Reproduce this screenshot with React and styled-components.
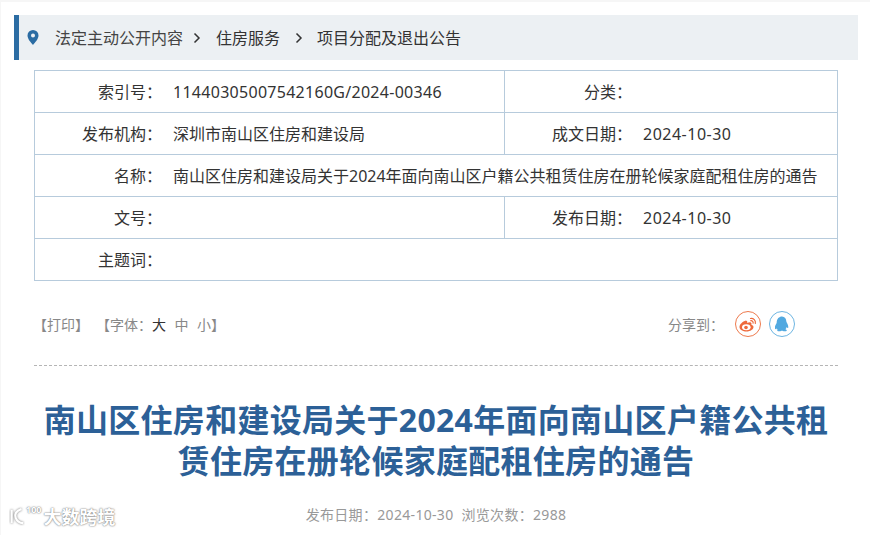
import React from "react";
import styled, { createGlobalStyle } from "styled-components";

const CJK = `"Noto Sans", "Noto Sans CJK SC", sans-serif`;

const GlobalStyle = createGlobalStyle`
  html, body {
    margin: 0;
    padding: 0;
    background: #fff;
    font-family: ${CJK};
    overflow: hidden;
  }
`;

const Page = styled.div`
  width: 870px;
  height: 535px;
  box-sizing: border-box;
  padding: 15px 12px 0 14px;
  background: #fff;
  border-top: 2px solid #f6f6f6;
  border-left: 1px solid #f6f6f6;
  position: relative;
  overflow: hidden;
`;

const Crumbs = styled.div`
  height: 45px;
  margin-top: -2px;
  margin-left: -1px;
  display: flex;
  align-items: center;
  box-sizing: border-box;
  border-left: 5px solid #2b6ca3;
  background: #ecf0f3;
  padding-left: 8px;
  font-size: 16px;
  color: #333;
`;

const CrumbText = styled.span`
  margin: 0 0 2px ${(p) => p.$left || 0}px;
  color: ${(p) => p.$color || "#333"};
`;

const Chevron = styled.svg`
  width: 8px;
  height: 12px;
  margin-left: ${(p) => p.$left}px;
`;

const InfoTable = styled.table`
  width: 803px;
  margin: 10px 0 0 19px;
  border-collapse: collapse;
  table-layout: fixed;
  font-size: 16px;
  color: #333;
`;

const Row = styled.tr`
  height: 42px;
`;

const Cell = styled.td`
  border: 1px solid #b7cbdc;
  padding: 0;
  white-space: nowrap;
`;

const CellBody = styled.div`
  display: flex;
  align-items: center;
`;

const Label = styled.span`
  width: 127px;
  margin-bottom: 2px;
  text-align: right;
  flex: none;
`;

const Value = styled.span`
  margin-left: 11px;
  margin-bottom: ${(p) => (p.$spacing ? 0 : 2)}px;
  letter-spacing: ${(p) => p.$spacing || 0}px;
`;

const Tools = styled.div`
  display: flex;
  align-items: center;
  height: 32px;
  margin: 27px 0 0 18px;
  font-size: 14px;
  color: #888;
`;

const ToolGroup = styled.span`
  margin-right: 7px;
`;

const SizeWord = styled.span`
  margin-left: ${(p) => (p.$active ? 0 : 8.5)}px;
  color: ${(p) => (p.$active ? "#333" : "#888")};
`;

const Share = styled.div`
  display: flex;
  align-items: center;
  margin-left: auto;
  margin-right: 63px;
  gap: 8px;
`;

const ShareLabel = styled.span`
  margin-right: 3px;
`;

const RoundIcon = styled.span`
  width: 26px;
  height: 26px;
  box-sizing: border-box;
  border-radius: 50%;
  border: 1px solid ${(p) => p.$color};
  display: flex;
  align-items: center;
  justify-content: center;
`;

const Dashed = styled.div`
  margin: 25px 0 0 19px;
  width: 804px;
  border-top: 1px dashed #b5b5b5;
`;

const Title = styled.h1`
  margin: 33px 0 0 19px;
  width: 804px;
  font-size: 32px;
  line-height: 41px;
  font-weight: 700;
  letter-spacing: 0.28px;
  text-align: center;
  color: #2c6097;
`;

const Meta = styled.div`
  margin: 23px 0 0 19px;
  width: 804px;
  text-align: center;
  font-size: 14px;
  letter-spacing: 0.32px;
  color: #999;
`;

const Watermark = styled.div`
  position: absolute;
  left: 8px;
  bottom: 6px;
  display: flex;
  align-items: center;
  color: #fff;
  font-size: 18px;
  font-weight: 700;
  text-shadow: 0 0 2px #777, 0 0 1px #999;
`;

const Hundred = styled.span`
  font-size: 9px;
  line-height: 10px;
  margin: -12px 2px 0 1px;
`;

function ChevronIcon({ left }) {
  return (
    <Chevron $left={left} viewBox="0 0 8 12">
      <path d="M1.500 1.500 6 6l-4.500 4.500" fill="none" stroke="#333" strokeWidth="1.500" />
    </Chevron>
  );
}

export default function App() {
  return (
    <Page>
      <GlobalStyle />
      <Crumbs>
        <svg width="12" height="15" viewBox="0 0 12 15">
          <path
            fillRule="evenodd"
            fill="#2b6ca3"
            d="M6 0a5.500 5.500 0 0 1 5.500 5.500C11.500 9 8 12.500 6 15 4 12.500.5 9 .5 5.500A5.500 5.500 0 0 1 6 0Zm0 3.500a2 2 0 1 0 0 4 2 2 0 0 0 0-4Z"
          />
        </svg>
        <CrumbText $left={16} $color="#444">法定主动公开内容</CrumbText>
        <ChevronIcon left={10} />
        <CrumbText $left={15}>住房服务</CrumbText>
        <ChevronIcon left={15} />
        <CrumbText $left={14}>项目分配及退出公告</CrumbText>
      </Crumbs>
      <InfoTable>
        <colgroup>
          <col style={{ width: 470 }} />
          <col style={{ width: 333 }} />
        </colgroup>
        <tbody>
          <Row>
            <Cell>
              <CellBody>
                <Label>索引号：</Label>
                <Value $spacing={0.28}>11440305007542160G/2024-00346</Value>
              </CellBody>
            </Cell>
            <Cell>
              <CellBody>
                <Label>分类：</Label>
              </CellBody>
            </Cell>
          </Row>
          <Row>
            <Cell>
              <CellBody>
                <Label>发布机构：</Label>
                <Value>深圳市南山区住房和建设局</Value>
              </CellBody>
            </Cell>
            <Cell>
              <CellBody>
                <Label>成文日期：</Label>
                <Value $spacing={0.5}>2024-10-30</Value>
              </CellBody>
            </Cell>
          </Row>
          <Row>
            <Cell colSpan={2}>
              <CellBody>
                <Label>名称：</Label>
                <Value>南山区住房和建设局关于2024年面向南山区户籍公共租赁住房在册轮候家庭配租住房的通告</Value>
              </CellBody>
            </Cell>
          </Row>
          <Row>
            <Cell>
              <CellBody>
                <Label>文号：</Label>
              </CellBody>
            </Cell>
            <Cell>
              <CellBody>
                <Label>发布日期：</Label>
                <Value $spacing={0.5}>2024-10-30</Value>
              </CellBody>
            </Cell>
          </Row>
          <Row>
            <Cell colSpan={2}>
              <CellBody>
                <Label>主题词：</Label>
              </CellBody>
            </Cell>
          </Row>
        </tbody>
      </InfoTable>
      <Tools>
        <ToolGroup>【打印】</ToolGroup>
        <ToolGroup>
          【字体：<SizeWord $active>大</SizeWord>
          <SizeWord>中</SizeWord>
          <SizeWord>小</SizeWord>】
        </ToolGroup>
        <Share>
          <ShareLabel>分享到：</ShareLabel>
          <RoundIcon $color="#ee7a4d">
            <svg width="18" height="15" viewBox="0 0 18 15">
              <path fill="#ee6a3c" d="M7 3.500C3.500 4.500.5 7.500.5 10c0 2.800 3.500 4.500 7 4.500 4 0 7-2.200 7-4.500 0-1.500-1.500-2-2.200-2.300.5-1.200.3-2.300-1.300-2.500-1 0-2 .3-2.800.7.300-1.500-.2-2.800-1.200-1.900Z" />
              <ellipse cx="7.300" cy="10.300" rx="4.300" ry="3" fill="#fff" />
              <circle cx="7" cy="10.500" r="1.800" fill="#ee6a3c" />
              <path d="M11.500 1.500c3-.5 5.500 2 4.800 5M11.800 3.700c1.500-.2 2.600 1 2.300 2.500" fill="none" stroke="#ee6a3c" strokeWidth="1.200" strokeLinecap="round" />
            </svg>
          </RoundIcon>
          <RoundIcon $color="#6db5e2">
            <svg width="14" height="17" viewBox="0 0 14 17">
              <path fill="#52a9e0" d="M7 .5c2.800 0 4.300 2.200 4.300 4.800 0 .6.300 1 .7 1.700.9 1.500 1.500 3.300 1.200 4.800-.4.600-1 0-1.500-.9-.2 1-.7 1.800-1.300 2.400.9.400 1.500.8 1.300 1.400-.3.700-2 .8-3.100.5-.5-.2-.7-.4-1.100-.4h-1c-.4 0-.6.2-1.100.4-1.100.3-2.800.2-3.100-.5-.2-.6.4-1 1.300-1.400C2 14 1.500 13.200 1.300 12.200c-.5.900-1.100 1.500-1.500.9-.3-1.500.3-3.300 1.200-4.800.4-.7.700-1.100.7-1.700C1.700 2.700 4.200.5 7 .5Z" />
            </svg>
          </RoundIcon>
        </Share>
      </Tools>
      <Dashed />
      <Title>南山区住房和建设局关于2024年面向南山区户籍公共租赁住房在册轮候家庭配租住房的通告</Title>
      <Meta>发布日期：2024-10-30&nbsp;&nbsp;浏览次数：2988</Meta>
      <Watermark>
        <svg width="16" height="20" viewBox="0 0 18 22">
          <g fill="none" stroke="#fff" strokeWidth="2.400" style={{ filter: "drop-shadow(0 0 1px #777)" }}>
            <path d="M3 4v15" />
            <path d="M14 3C8 5 6 9 7.500 13s4 5.500 8.500 6" />
          </g>
        </svg>
        <Hundred>100</Hundred>
        <span>大数跨境</span>
      </Watermark>
    </Page>
  );
}
